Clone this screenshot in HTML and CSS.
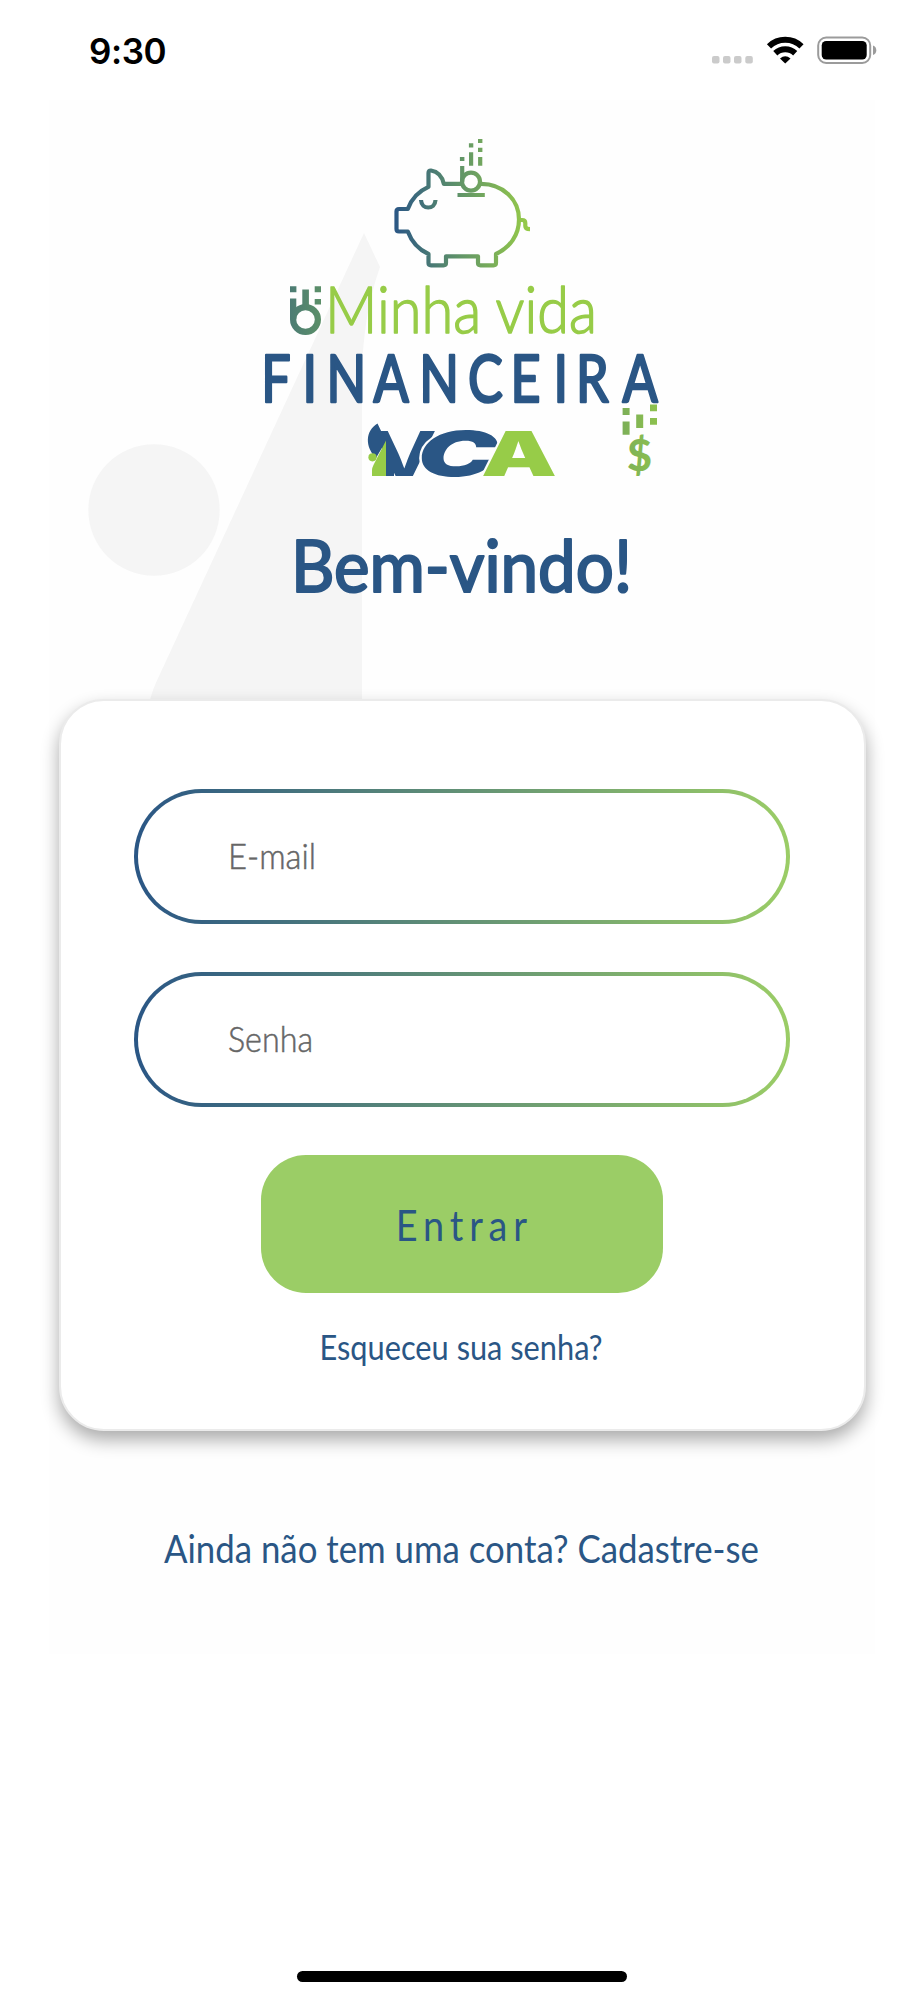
FILE: index.html
```html
<!DOCTYPE html>
<html lang="pt-BR">
<head>
<meta charset="utf-8">
<title>Minha vida Financeira</title>
<link rel="stylesheet" href="styles.css">
</head>
<body>
<div class="screen">
  <header class="status">
    <span class="time">9:30</span>
    <svg class="indicators" width="170" height="40" viewBox="710 30 170 40">
      <g fill="#cbcbcb"><rect x="712" y="56" width="7.5" height="7.5" rx="2"/><rect x="723" y="56" width="7.5" height="7.5" rx="2"/><rect x="734" y="56" width="7.5" height="7.5" rx="2"/><rect x="745.3" y="56" width="7.5" height="7.5" rx="2"/></g>
      <g fill="none" stroke="#000" stroke-width="6"><path d="M769 46.300A23.500 23.500 0 0 1 801.500 46.300"/><path d="M775.300 53.300A14.500 14.500 0 0 1 795.200 53.300"/></g>
      <path d="M785.200 63.500L780 58.600Q785.200 54 790.500 58.600Z"/>
      <rect x="818.200" y="37.500" width="52" height="25.500" rx="8" fill="none" stroke="#9b9b9b" stroke-width="2"/>
      <rect x="821.700" y="41" width="45" height="18.500" rx="4.500"/>
      <path d="M873 45.500q3.300 1.200 3.300 4.800t-3.300 4.800z" fill="#9b9b9b"/>
    </svg>
  </header>

  <main class="panel">
    <svg class="backdrop" width="400" height="600" viewBox="49 100 400 600" aria-hidden="true">
      <circle cx="154" cy="510" r="65.700"/>
      <path d="M364 233L380 267Q362 318 362 380V700H150Q153 688 160 674Z"/>
    </svg>

    <svg class="logo" width="420" height="350" viewBox="250 130 420 350" role="img">
      <defs>
        <linearGradient id="pig" gradientUnits="userSpaceOnUse" x1="394" y1="0" x2="530" y2="0"><stop offset="0" stop-color="#2a5685"/><stop offset=".5" stop-color="#629667"/><stop offset="1" stop-color="#97cc48"/></linearGradient>
        <linearGradient id="coin" gradientUnits="userSpaceOnUse" x1="290" y1="0" x2="322" y2="0"><stop offset="0" stop-color="#4c7c74"/><stop offset="1" stop-color="#5c9068"/></linearGradient>
        <linearGradient id="cash" gradientUnits="userSpaceOnUse" x1="622" y1="0" x2="657" y2="0"><stop offset="0" stop-color="#7caf58"/><stop offset="1" stop-color="#8dc14e"/></linearGradient>
      </defs>
      <g fill="none" stroke="url(#pig)" stroke-width="4.200" stroke-linejoin="round">
        <path d="M461 183.800H443.800C442 176 437.500 171.500 431 170.500Q428.500 170.300 428.500 173V186.800C419 191 411.500 198.500 407.800 209H399Q396.500 209 396.500 211.500V229Q396.500 231.500 399 231.500H407.800C411.500 241.500 418.500 249.500 428.500 254V263Q428.500 265.300 431 265.300H443.500Q446 265.300 446 263V256.300H478V263Q478 265.300 480.500 265.300H493.500Q496 265.300 496 263V254C510 247.500 519 235 519 219.500C519 199.500 503 183.800 481 183.800"/>
        <circle cx="471" cy="181.700" r="9"/>
        <path d="M462.200 166V182"/>
        <path d="M421 200C421.500 210 435 210 435.500 200"/>
        <path d="M457.500 195H484.800M471.100 152.300V165.700M480.200 157V165.700M459.900 159H464.400M468.900 145.300H473.300M478 141H482.400M478 149.800H482.400"/>
        <path d="M519 220H522Q525.300 220 525.300 223V226Q525.300 229.200 530 229.200"/>
      </g>
      <g fill="url(#coin)">
        <path d="M290 286.300h6.400v6h-6.400zM314.700 286.300h6.300v6h-6.300zM314.700 299h6.300v5.600h-6.300zM302.300 289.500h6.600v18h-6.600zM290 298.500h6.300v21h-6.300z"/>
        <circle cx="305.500" cy="319.500" r="12.400" fill="none" stroke="url(#coin)" stroke-width="6.200"/>
      </g>
      <text class="brand-light" x="325" y="333" textLength="272" lengthAdjust="spacingAndGlyphs">Minha vida</text>
      <g transform="scale(.8 1)"><text class="brand-bold" y="402" x="326.500 378 408 467 524 585 638 692 720 778">FINANCEIRA</text></g>
      <g class="vca">
        <text class="peak" x="371" y="475.500" fill="#2a5685" textLength="66" lengthAdjust="spacingAndGlyphs">V</text>
        <text class="gap" x="417" y="475.500" fill="#2a5685" font-style="italic" textLength="81" lengthAdjust="spacingAndGlyphs">C</text>
        <text class="gap" x="481" y="475.500" fill="#97cc48" textLength="76" lengthAdjust="spacingAndGlyphs">A</text>
      </g>
      <path fill="#2a5685" d="M377.500 423.500L394 458V476H386V441L376 458C365 447 365 431 377.500 423.500Z"/>
      <path fill="#97cc48" d="M386 440.500V476H372V470Q372 468 373.500 465Z"/>
      <circle cx="372.500" cy="457.300" r="4.100" fill="#97cc48"/>
      <g fill="url(#cash)">
        <path d="M622.600 408h7v7h-7zM622.600 421.500h7v13.300h-7zM636.200 414.500h7v13.500h-7zM650 404.500h7v6.700h-7zM650 418h7v6.800h-7z"/>
        <text class="dollar" x="627" y="470.500" textLength="25" lengthAdjust="spacingAndGlyphs">$</text>
      </g>
    </svg>

    <h1 class="welcome"><svg width="360" height="100" viewBox="0 0 360 100"><text x="9" y="68.500" textLength="341" lengthAdjust="spacingAndGlyphs">Bem-vindo!</text></svg></h1>

    <form class="card">
      <label class="field"><svg width="400" height="60" viewBox="0 0 400 60"><text x="-1" y="44" textLength="88" lengthAdjust="spacingAndGlyphs">E-mail</text></svg></label>
      <label class="field"><svg width="400" height="60" viewBox="0 0 400 60"><text x="-1" y="44" textLength="85" lengthAdjust="spacingAndGlyphs">Senha</text></svg></label>
      <button class="submit" type="button"><svg width="200" height="60" viewBox="0 0 200 60"><g transform="scale(.88 1)"><text x="38.500" y="47" textLength="149">Entrar</text></g></svg></button>
      <a class="forgot"><svg width="320" height="50" viewBox="0 0 320 50"><text x="17.500" y="36" textLength="283" lengthAdjust="spacingAndGlyphs">Esqueceu sua senha?</text></svg></a>
    </form>

    <a class="signup"><svg width="640" height="60" viewBox="0 0 640 60"><text x="22" y="42" textLength="595" lengthAdjust="spacingAndGlyphs">Ainda não tem uma conta? Cadastre-se</text></svg></a>
  </main>
  <div class="home"></div>
</div>
</body>
</html>
```
FILE: styles.css
```css
* { box-sizing: border-box; }
body { margin: 0; background: #fff; font-family: Lato, "Open Sans", sans-serif; color: #2a5685; }
svg { display: block; overflow: visible; }
.screen { width: 924px; height: 2000px; display: flex; flex-direction: column; overflow: hidden; }
.status { height: 100px; padding: 30px 44px 0 89px; display: flex; justify-content: space-between; align-items: flex-start; }
.time { font: 600 35px/42px Inter, sans-serif; color: #000; letter-spacing: -.4px; }
.panel { position: relative; height: 1554px; margin: 0 49px; background: #fefefe; display: flex; flex-direction: column; align-items: center; }
.backdrop { position: absolute; left: 0; top: 0; fill: #f5f5f5; }
.logo { position: relative; margin: 30px 0 0 -4px; }
.brand-light { font-size: 66px; font-weight: 300; fill: #97cc48; stroke: #97cc48; stroke-width: 1.6px; stroke-linejoin: round; }
.brand-bold { font-size: 65px; font-weight: 400; fill: #2a5685; stroke: #2a5685; stroke-width: 2.6px; stroke-linejoin: round; }
.vca text { font-family: Inter, sans-serif; font-weight: 900; font-size: 62px; }
.vca .peak { font-weight: 700; }
.vca .gap { stroke: #fefefe; stroke-width: 3px; paint-order: stroke; }
.dollar { font-weight: 900; font-size: 44px; }
.welcome { position: relative; margin: 43px 0 0; }
.welcome text { font-size: 71px; font-weight: 400; fill: #2a5685; stroke: #2a5685; stroke-width: 2.2px; stroke-linejoin: round; }
.card { position: relative; width: 807px; height: 732px; margin: 76px 0 0; padding: 88px 73px 0; border: 2px solid #ebebeb; border-radius: 45px; background: #fff; box-shadow: 0 9px 18px rgba(0, 0, 0, .33); display: flex; flex-direction: column; align-items: center; }
.field { width: 656px; height: 135px; margin-bottom: 48px; padding: 32px 0 0 91px; border: 4.4px solid transparent; border-radius: 68px; background: linear-gradient(#fff, #fff) padding-box, linear-gradient(90deg, #2a5685, #9bcd66) border-box; }
.field text { font-size: 35px; font-weight: 300; fill: #666; stroke: #666; stroke-width: .5px; }
.submit { width: 402px; height: 138px; padding: 0; border: 0; border-radius: 45px; background: #9bcd66; display: flex; align-items: center; justify-content: center; font-family: inherit; }
.submit text { font-size: 43px; fill: #2a5685; }
.forgot { margin-top: 31px; }
.forgot text { font-size: 34px; fill: #2a5685; }
.signup { margin-top: 90px; }
.signup text { font-size: 38px; fill: #2a5685; }
.home { width: 330px; height: 11px; margin: 317px auto 0; border-radius: 6px; background: #000; }
```
